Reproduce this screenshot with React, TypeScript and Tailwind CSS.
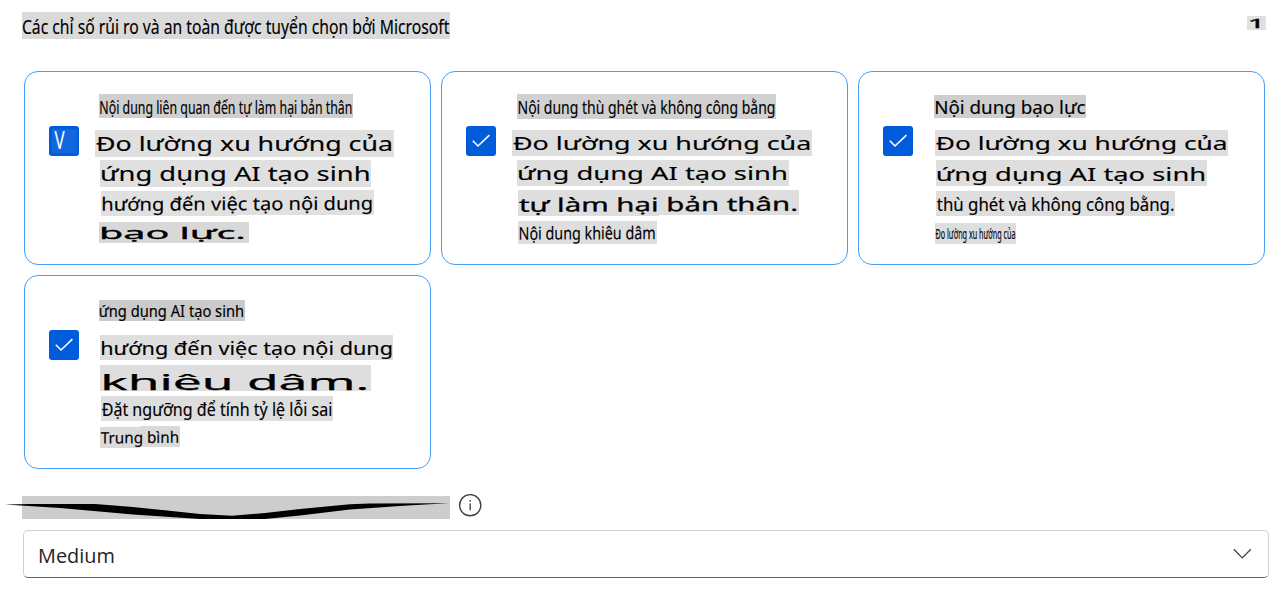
import { useLayoutEffect, useRef } from 'react';
import clsx from 'clsx';

type Line = {
  text: string;
  /** Size, offset and background of the strip behind the text. */
  box: string;
  size: number;
  /** Ink start, ink width and baseline, relative to the strip. */
  x: number;
  width: number;
  baseline: number;
  tilt?: number;
  font?: string;
  stroke?: string;
};

function FitText({
  text,
  box,
  size,
  x,
  width,
  baseline,
  tilt = 0,
  font = 'Noto Sans',
  stroke = '[-webkit-text-stroke:0.15px_currentColor]',
}: Line) {
  const ref = useRef<HTMLSpanElement>(null);

  useLayoutEffect(() => {
    const el = ref.current;
    const ctx = document.createElement('canvas').getContext('2d');
    if (!el || !ctx) return;
    ctx.font = `${size}px "${font}"`;
    const m = ctx.measureText(text);
    const scale = width / (m.actualBoundingBoxRight + m.actualBoundingBoxLeft);
    const top = baseline - (size / 2 + (m.fontBoundingBoxAscent - m.fontBoundingBoxDescent) / 2);
    el.style.transform = `matrix(${scale}, ${tilt * scale}, 0, 1, ${x + m.actualBoundingBoxLeft * scale}, ${top})`;
  }, [text, size, x, width, baseline, tilt, font]);

  return (
    <div className={clsx('shrink-0', box)}>
      <span
        ref={ref}
        className={clsx('block w-max origin-top-left leading-none whitespace-nowrap', stroke)}
        style={{ fontSize: size, fontFamily: `"${font}", sans-serif` }}
      >
        {text}
      </span>
    </div>
  );
}

const cards: { letter?: boolean; lines: Line[] }[] = [
  {
    letter: true,
    lines: [
      { text: 'Nội dung liên quan đến tự làm hại bản thân', box: 'mt-[22px] h-6 w-[254px] bg-[#cfcfcf]', size: 18.4, x: 1, width: 251.5, baseline: 20.6 },
      { text: 'Đo lường xu hướng của', box: 'mt-3 -ml-1 h-[27px] w-[299px] bg-[#e0e0e0]', size: 19, x: 1, width: 296, baseline: 21.2 },
      { text: 'ứng dụng AI tạo sinh', box: 'mt-[3px] ml-px h-[27px] w-[271px] bg-[#e0e0e0]', size: 19, x: 1.5, width: 268, baseline: 21.2 },
      { text: 'hướng đến việc tạo nội dung', box: 'mt-[3px] ml-0.5 h-[26px] w-[273px] bg-[#e0e0e0] [clip-path:polygon(0_1px,136px_1px,136px_0,100%_0,100%_25px,136px_25px,136px_26px,0_26px)]', size: 18.3, x: 1.3, width: 269.5, baseline: 21.5, tilt: -0.004 },
      { text: 'bạo lực.', box: 'mt-1.5 h-[21px] w-[150px] bg-[#d8d8d8]', size: 15.6, x: 2.5, width: 144, baseline: 18, stroke: '[-webkit-text-stroke:0.3px_currentColor]' },
    ],
  },
  {
    lines: [
      { text: 'Nội dung thù ghét và không công bằng', box: 'mt-[22px] ml-px h-[25px] w-[259px] bg-[#d1d1d1]', size: 18.6, x: 1.3, width: 256, baseline: 20.7 },
      { text: 'Đo lường xu hướng của', box: 'mt-[11px] -ml-1 h-[26px] w-[300px] bg-[#dedede]', size: 18.8, x: 1, width: 297.5, baseline: 20.7 },
      { text: 'ứng dụng AI tạo sinh', box: 'mt-1 ml-px h-[26px] w-[272px] bg-[#dedede]', size: 18.8, x: 1.5, width: 268.5, baseline: 20.7 },
      { text: 'tự làm hại bản thân.', box: 'mt-1 ml-0.5 h-[26px] w-[281px] bg-[#dedede] [clip-path:polygon(0_0,100%_0,100%_25px,141px_25px,141px_26px,0_26px)]', size: 18.8, x: 1, width: 277.5, baseline: 22.2, tilt: -0.004, stroke: '[-webkit-text-stroke:0.3px_currentColor]' },
      { text: 'Nội dung khiêu dâm', box: 'mt-[5px] ml-0.5 h-[23px] w-[138.5px] bg-[#dedede]', size: 17.6, x: 1.3, width: 136, baseline: 19.5, tilt: -0.004 },
    ],
  },
  {
    lines: [
      { text: 'Nội dung bạo lực', box: 'mt-[23px] ml-px h-[23px] w-[152px] bg-[#cecece]', size: 17.2, x: 1.3, width: 150, baseline: 18.6 },
      { text: 'Đo lường xu hướng của', box: 'mt-3 ml-0.5 h-[26px] w-[293px] bg-[#dedede]', size: 18.8, x: 0.8, width: 291, baseline: 20.7 },
      { text: 'ứng dụng AI tạo sinh', box: 'mt-1 ml-[3px] h-[26px] w-[271px] bg-[#dedede]', size: 18.8, x: 1.3, width: 268, baseline: 21 },
      { text: 'thù ghét và không công bằng.', box: 'mt-[5px] ml-[3px] h-[25px] w-[239px] bg-[#dedede]', size: 18.5, x: 0.8, width: 236.8, baseline: 20.5 },
      { text: 'Đo lường xu hướng của', box: 'mt-[7px] ml-0.5 h-[21px] w-[81px] bg-[#dedede]', size: 15, x: 0.5, width: 79.8, baseline: 16.7 },
    ],
  },
  {
    lines: [
      { text: 'ứng dụng AI tạo sinh', box: 'mt-6 h-[21px] w-[146px] bg-[#cacaca]', size: 15.4, x: 0.8, width: 143.8, baseline: 17.5 },
      { text: 'hướng đến việc tạo nội dung', box: 'mt-3.5 ml-px h-[25px] w-[293px] bg-[#dedede]', size: 18.5, x: 1.4, width: 290, baseline: 20.7 },
      { text: 'khiêu dâm.', box: 'mt-[5px] ml-px h-[26px] w-[271px] bg-[#dedede]', size: 22, x: 2.7, width: 264.5, baseline: 25, stroke: '[-webkit-text-stroke:0.25px_currentColor]' },
      { text: 'Đặt ngưỡng để tính tỷ lệ lỗi sai', box: 'mt-[5px] ml-0.5 h-[25px] w-[232px] bg-[#dedede]', size: 18, x: 0.7, width: 230, baseline: 19.8 },
      { text: 'Trung bình', box: 'mt-[5px] ml-px h-[22px] w-20 bg-[#dadada] [clip-path:polygon(0_1px,40px_1px,40px_0,100%_0,100%_21px,40px_21px,40px_22px,0_22px)]', size: 15.6, x: 0.8, width: 77.7, baseline: 18.4, tilt: -0.012 },
    ],
  },
];

function Checkbox({ letter }: { letter?: boolean }) {
  return (
    <div className="mt-[54px] ml-6 flex size-[30px] shrink-0 items-center justify-center rounded-[3px] bg-[#005cdb] text-white">
      {letter ? (
        <FitText text="V" box="h-6 w-[25px] bg-[#1266dd]" size={25.2} x={2.6} width={10.8} baseline={20.5} font="Open Sans" />
      ) : (
        <svg viewBox="0 0 30 30" className="size-[30px]" fill="none" stroke="currentColor" strokeWidth="1.6">
          <path d="M6.8 14.8 12 20 23.4 9.2" />
        </svg>
      )}
    </div>
  );
}

export default function App() {
  return (
    <main className="h-[591px] w-[1279px] overflow-hidden bg-white text-black">
      <header className="flex items-start justify-between pt-3 pr-[13px] pl-[22px]">
        <FitText text="Các chỉ số rủi ro và an toàn được tuyển chọn bởi Microsoft" box="h-[27px] w-[428px] bg-[#dadada]" size={19.4} x={0.7} width={426.6} baseline={21.8} />
        <FitText text="1" box="mt-1 h-3.5 w-[19px] bg-[#e0e0e0]" size={12.2} x={3} width={10.3} baseline={13} stroke="[-webkit-text-stroke:0.3px_currentColor]" />
      </header>

      <section className="mt-8 ml-6 grid w-[1241px] grid-cols-3 gap-2.5">
        {cards.map((card, i) => (
          <article key={i} className="flex h-[194px] rounded-[14px] border border-[#479ef5]">
            <Checkbox letter={card.letter} />
            <div className="ml-5 flex flex-col">
              {card.lines.map((line, j) => (
                <FitText key={j} {...line} />
              ))}
            </div>
          </article>
        ))}
      </section>

      <div className="mt-6 flex h-[26px] items-start">
        <svg className="h-[26px] w-[450px]" viewBox="0 0 450 26">
          <path d="M22 3H450V26H22Z" fill="#cdcdcd" />
          <path d="M5 11.4 30 11 95 11 133 14 167 17.6 200 21 232 22.8 265 20 300 16 350 11.2 370 10.6 449 10.2 425 11.4 400 13 350 16.6 300 22.4 265 26H200L133 21.4 60 15Z" fill="#000" />
        </svg>
        <svg className="ml-2 size-6" viewBox="0 0 24 24" fill="none" stroke="#424242" strokeWidth="1.4">
          <circle cx="12.2" cy="12.2" r="10.6" />
          <path d="M12.2 10.5V17.2" />
          <circle cx="12.2" cy="7.8" r="0.9" fill="#424242" stroke="none" />
        </svg>
      </div>

      <button className="mt-[11px] ml-[23px] flex h-12 w-[1246px] items-start rounded-[5px] border border-[#d1d1d1] border-b-[#616161] text-[#242424]">
        <FitText text="Medium" box="mt-2 ml-3 h-8 w-24" size={20.4} x={3} width={75} baseline={24} font="Open Sans" stroke="" />
        <svg className="mt-[14px] mr-4 ml-auto h-[18px] w-5" viewBox="0 0 20 18" fill="none" stroke="#424242" strokeWidth="1.3">
          <path d="M1.8 4.2 10.3 12.9 18.8 4.2" />
        </svg>
      </button>
    </main>
  );
}
